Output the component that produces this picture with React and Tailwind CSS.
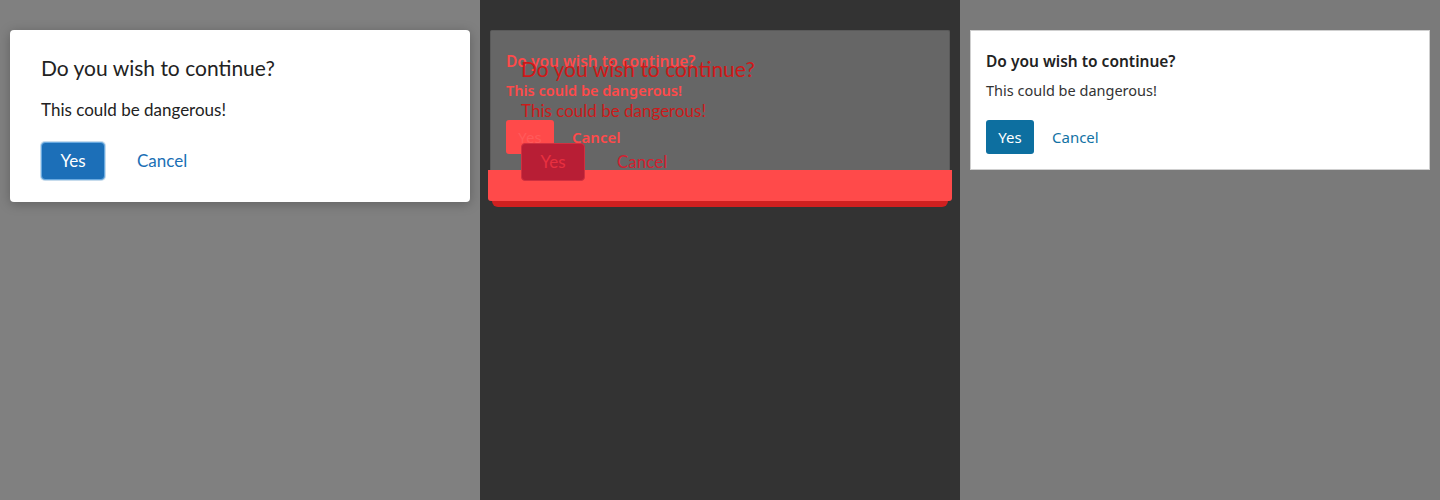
// App.jsx — three-up confirm dialog comparison (reference / diff / candidate)

const bigFont = { fontFamily: 'Lato, "Noto Sans", sans-serif' };
const smallFont = { fontFamily: '"Noto Sans", "Open Sans", sans-serif' };

function BigDialogBody({ tone = "normal" }) {
  const diff = tone === "diff";
  return (
    <div className={`flex flex-col pt-[23px] pr-[30px] ${diff ? "pl-[30px]" : "pl-[31px]"}`} style={bigFont}>
      <h2
        className={`text-[21px] leading-[30px] font-normal ${
          diff ? "text-[#d01818]" : "text-[#222222]"
        }`}
      >
        Do you wish to continue?
      </h2>
      <p
        className={`mt-[15px] text-[17px] leading-[24px] ${
          diff ? "text-[#cc1a1a]" : "text-[#222222]"
        }`}
      >
        This could be dangerous!
      </p>
      <div className="mt-[20px] flex items-center">
        <button
          className={`w-[64px] h-[38px] rounded-[4px] border text-[17px] ${
            diff
              ? "bg-[#b81e35] border-[#d03040] text-[#e83040]"
              : "bg-[#1c6fb8] border-[#6aaae0] text-white shadow-[0_0_0_1px_rgba(26,111,181,0.25)]"
          }`}
        >
          Yes
        </button>
        <button
          className={`ml-[32px] text-[17px] ${
            diff ? "text-[#d42030]" : "text-[#1a6fb5]"
          }`}
        >
          Cancel
        </button>
      </div>
    </div>
  );
}

function SmallDialogBody({ tone = "normal" }) {
  const diff = tone === "diff";
  return (
    <div className="flex flex-col pt-[19px] px-[15px]" style={smallFont}>
      <h2
        className={`text-[15.5px] leading-[22px] font-semibold ${
          diff ? "text-[#ff4a4a]" : "text-[#222222]"
        }`}
      >
        Do you wish to continue?
      </h2>
      <p
        className={`mt-[7px] text-[14.5px] leading-[22px] ${
          diff ? "text-[#ff4a4a] font-semibold" : "text-[#333333]"
        }`}
      >
        This could be dangerous!
      </p>
      <div className="mt-[19px] flex items-center">
        <button
          className={`w-[48px] h-[34px] rounded-[3px] text-[15px] ${
            diff ? "bg-[#ff4a4a] text-[#ff5a5a]" : "bg-[#0d6fa0] text-white"
          }`}
        >
          Yes
        </button>
        <button
          className={`ml-[18px] text-[15px] ${
            diff ? "text-[#ff4a4a] font-semibold" : "text-[#1272a4]"
          }`}
        >
          Cancel
        </button>
      </div>
    </div>
  );
}

export default function App() {
  return (
    <div className="grid grid-cols-3 h-[500px] w-[1440px] overflow-hidden">
      {/* Reference */}
      <div className="bg-[#808080] pt-[30px] px-[10px]">
        <div className="bg-white rounded-[4px] h-[172px] shadow-[0_2px_12px_rgba(0,0,0,0.25)]">
          <BigDialogBody />
        </div>
      </div>

      {/* Diff overlay */}
      <div className="bg-[#333333] pt-[30px] px-[10px]">
        <div className="flex flex-col">
          <div className="relative h-[140px] bg-[#666666] border-x border-t border-[#5a5a5a] rounded-t-[2px]">
            <div className="absolute inset-0">
              <SmallDialogBody tone="diff" />
            </div>
            <div className="absolute inset-0">
              <BigDialogBody tone="diff" />
            </div>
          </div>
          <div className="-mx-[2px] h-[31px] bg-[#ff4a4a] rounded-b-[3px]" />
          <div className="mx-[2px] h-[6px] bg-[#d02020] rounded-b-[10px]" />
        </div>
      </div>

      {/* Candidate */}
      <div className="bg-[#7a7a7a] pt-[30px] px-[10px]">
        <div className="bg-white h-[140px] border border-[#cfcfcf]">
          <SmallDialogBody />
        </div>
      </div>
    </div>
  );
}
